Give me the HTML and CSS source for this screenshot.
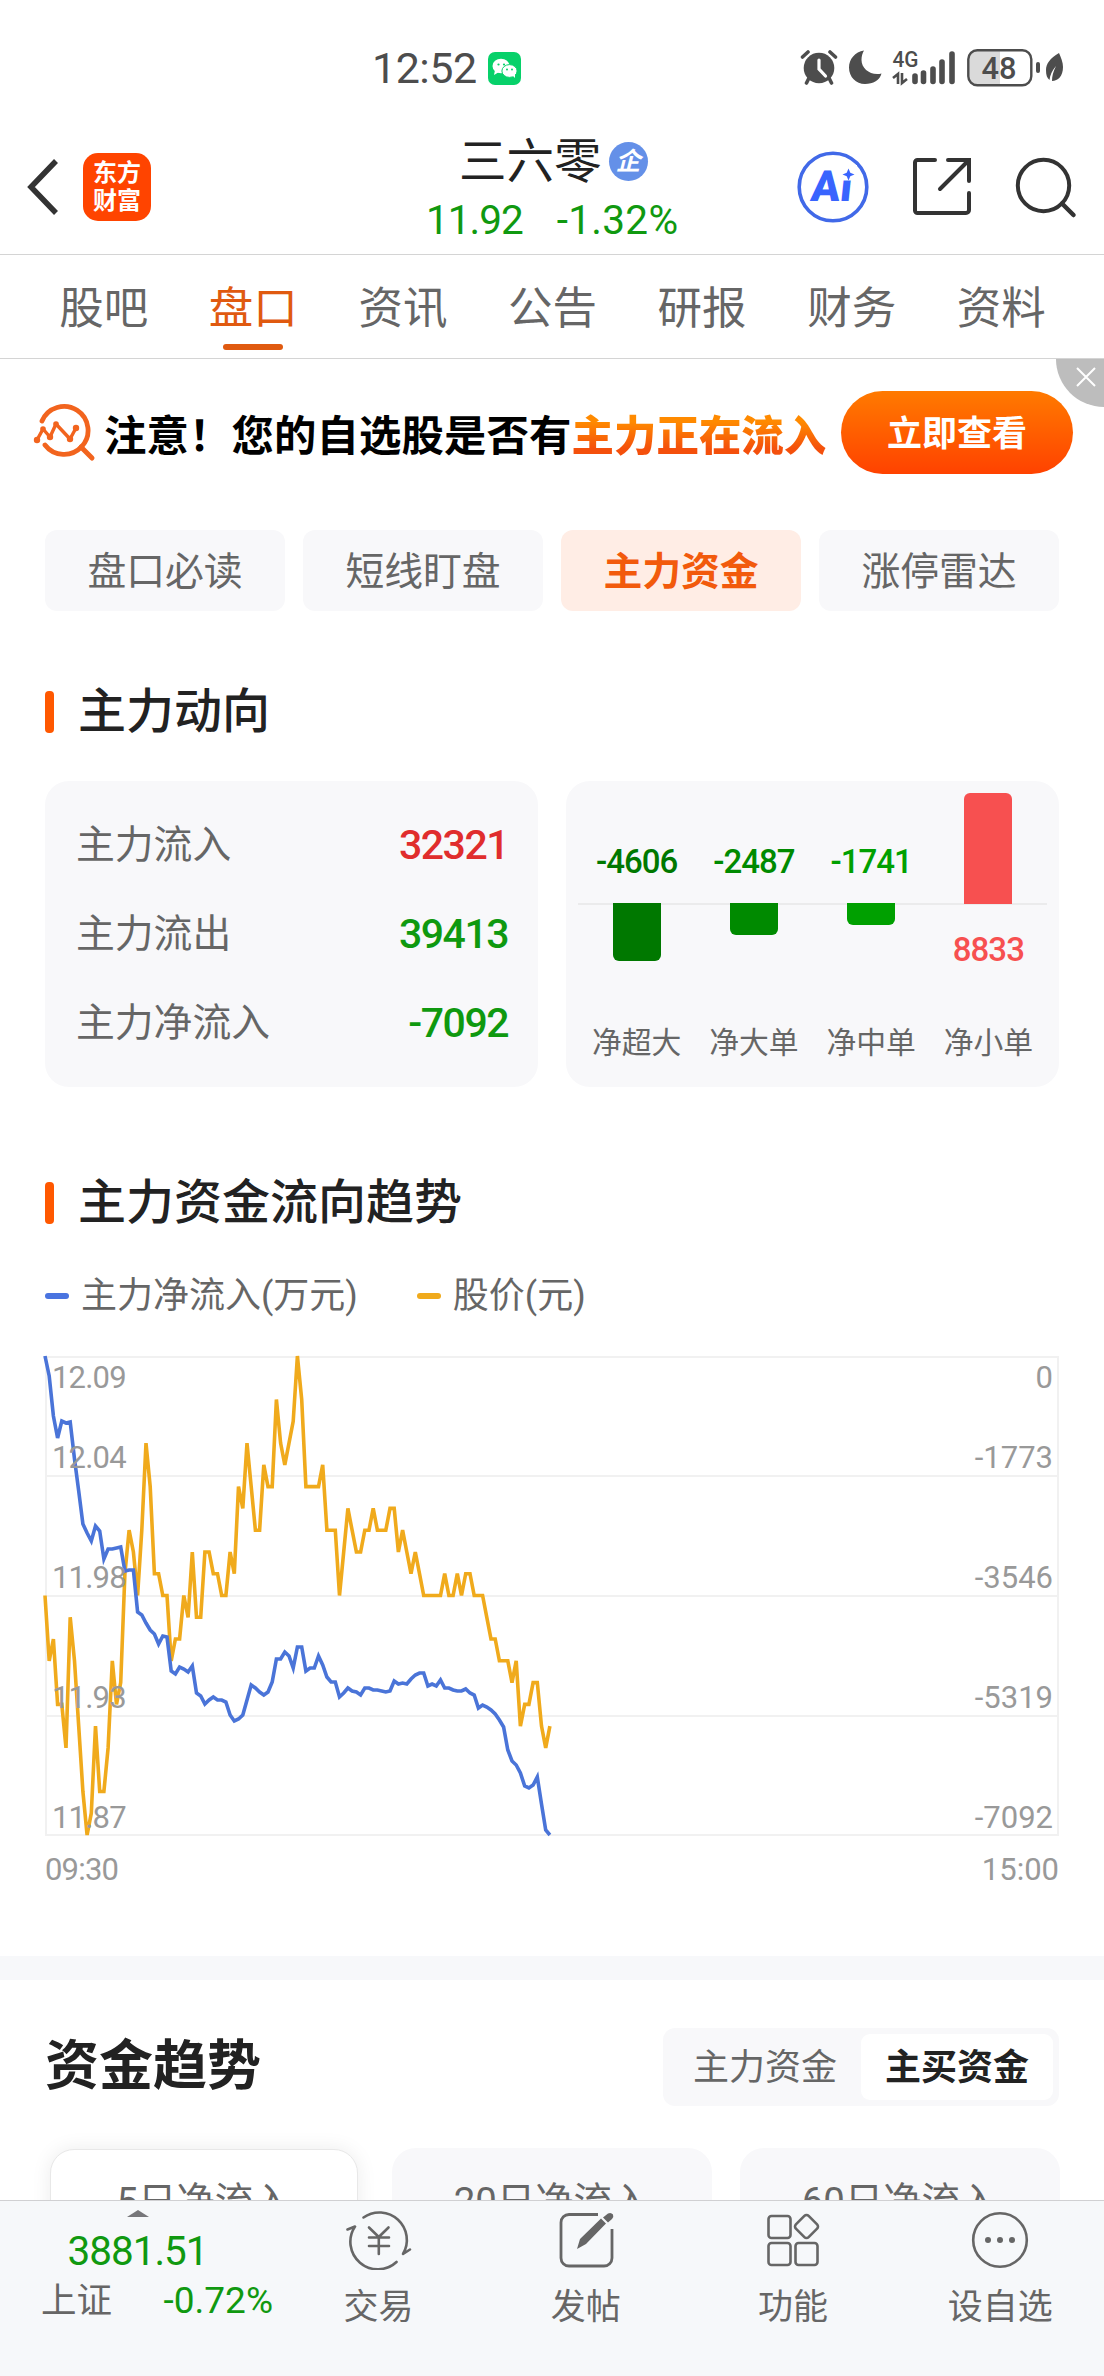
FILE: index.html
```html
<!DOCTYPE html>
<html lang="zh-CN">

<head>
    <meta charset="UTF-8">
    <title>三六零 - 主力资金</title>
    <link rel="stylesheet" href="styles.css">
</head>

<body>
    <div class="status-bar">
        <span class="time">12:52</span>
        <svg class="wechat" viewBox="0 0 33 33">
            <rect width="33" height="33" rx="7" fill="#07d16a"/>
            <ellipse cx="13" cy="14" rx="8.5" ry="7.3" fill="#fff"/>
            <path d="M7 18l-1 5 5-3z" fill="#fff"/>
            <ellipse cx="21.5" cy="19" rx="7.6" ry="6.4" fill="#fff" stroke="#07d16a" stroke-width="1"/>
            <path d="M24 23l3 3v-5z" fill="#fff"/>
            <g fill="#07d16a">
                <circle cx="10.5" cy="12.5" r="1.1"/>
                <circle cx="16" cy="12.5" r="1.1"/>
                <circle cx="19" cy="17.5" r="1"/>
                <circle cx="24" cy="17.5" r="1"/>
            </g>
        </svg>
        <svg class="status-icons" viewBox="0 0 266 40">
            <!-- 闹钟 -->
            <circle cx="19" cy="20" r="15.3" fill="#4d4d4d"/>
            <path d="M2.5 9l5.5-5M30 4l5.5 5M9 30l-2.5 5M29 30l2.5 5" stroke="#4d4d4d" stroke-width="3.6" stroke-linecap="round"/>
            <path d="M19 12v9l6.5 7" fill="none" stroke="#fff" stroke-width="3.2" stroke-linecap="round"/>
            <!-- 勿扰 -->
            <path d="M64 2.5C55 4 49 11 49 19.5C49 29 56 36 65 36C73 36 80 32 81.5 25.5C71 28 61.5 21 61.5 12C61.5 8 62.5 5 64 2.5z" fill="#4d4d4d"/>
            <!-- 信号 -->
            <text x="92.5" y="18.5" font-size="21.5" font-weight="500" textLength="26" lengthAdjust="spacingAndGlyphs" fill="#4d4d4d">4G</text>
            <path d="M93 30l5-4v10M102 25v10l5-4" fill="none" stroke="#4d4d4d" stroke-width="2.6"/>
            <path d="M115 28v5.5M123.5 25v8.5M133 21v12.5M142 14v19.5M152 6v27.5" stroke="#4d4d4d" stroke-width="5.6" stroke-linecap="round"/>
            <!-- 电量 -->
            <path d="M200 3h-23a8 8 0 0 0-8 8v17a8 8 0 0 0 8 8h23z" fill="#dadada"/>
            <rect x="168.3" y="2.3" width="63" height="35" rx="9" fill="none" stroke="#4d4d4d" stroke-width="2.4"/>
            <text x="199" y="30.8" font-size="32" font-weight="500" text-anchor="middle" textLength="35" lengthAdjust="spacingAndGlyphs" fill="#4d4d4d">48</text>
            <rect x="236" y="14" width="4" height="11" rx="2" fill="#4d4d4d"/>
            <path d="M259 5C250 10 246 16 246 22C246 27 247 30 249.5 32C250 27 252 23 256 18C253 24 252 28 252 33C258 33 263 28 263 19C263 14 261 10 259 5z" fill="#4d4d4d"/>
        </svg>
    </div>

    <header>
        <div class="header-left">
            <svg class="back" viewBox="0 0 32 58"><path d="M29 3L4 29L29 55" fill="none" stroke="#333" stroke-width="5.5"/></svg>
            <div class="logo">东方<br>财富</div>
        </div>
        <div class="stock">
            <div class="stock-name">三六零<span class="badge">企</span></div>
            <div class="stock-price"><span>11.92</span><span class="rate">-1.32%</span></div>
        </div>
        <div class="header-right">
            <svg class="ai" viewBox="0 0 72 72">
                <circle cx="36" cy="36" r="33.8" fill="none" stroke="#4169e8" stroke-width="3.6"/>
                <text x="18" y="50.5" font-size="43" font-weight="900" textLength="41" lengthAdjust="spacingAndGlyphs" transform="skewX(-6)" fill="#3964fe">Ai</text>
                <rect x="43" y="14" width="17" height="15.5" fill="#fff"/>
                <path d="M51.5 17.5l1.8 4.2 4.2 1.8-4.2 1.8-1.8 4.2-1.8-4.2-4.2-1.800 4.2-1.8z" fill="#3964fe"/>
            </svg>
            <svg class="share" viewBox="0 0 62 62">
                <path d="M24 4H6.5a2.5 2.5 0 0 0-2.5 2.5V54.5a2.5 2.5 0 0 0 2.5 2.5H55a3 3 0 0 0 3-3V37M37 4H58V25M57 5L29 33" fill="none" stroke="#333" stroke-width="4" stroke-linecap="round"/>
            </svg>
            <svg class="search" viewBox="0 0 64 64">
                <circle cx="30.5" cy="30.5" r="25.7" fill="none" stroke="#333" stroke-width="4"/>
                <path d="M49 48.5L60.5 60" stroke="#333" stroke-width="4.5" stroke-linecap="round"/>
            </svg>
        </div>
    </header>

    <nav class="tabs">
        <a>股吧</a>
        <a class="on">盘口</a>
        <a>资讯</a>
        <a>公告</a>
        <a>研报</a>
        <a>财务</a>
        <a>资料</a>
    </nav>

    <div class="banner">
        <svg class="banner-icon" viewBox="0 0 64 62">
            <g fill="none" stroke="#f2641e" stroke-linecap="round" stroke-linejoin="round">
                <path d="M10 19A24 24 0 1 1 13 43" stroke-width="4.8"/>
                <path d="M49 45L60 56" stroke-width="5"/>
                <path d="M5 38L11 27L18 35L24 22L38 37L44 26" stroke-width="3.4"/>
            </g>
            <g fill="#f2641e">
                <circle cx="5" cy="38" r="3.2"/>
                <circle cx="11" cy="27" r="2.8"/>
                <circle cx="18" cy="35" r="3.2"/>
                <circle cx="24" cy="22" r="2.8"/>
                <circle cx="38" cy="37" r="3.2"/>
                <circle cx="44" cy="26" r="3.2"/>
            </g>
        </svg>
        <p>注意！您的自选股是否有<b>主力正在流入</b></p>
        <button>立即查看</button>
        <div class="close">
            <svg viewBox="0 0 20 20"><path d="M1 1L19 19M19 1L1 19" stroke="#fff" stroke-width="2"/></svg>
        </div>
    </div>

    <div class="pills">
        <a>盘口必读</a>
        <a>短线盯盘</a>
        <a class="on">主力资金</a>
        <a>涨停雷达</a>
    </div>

    <h2 class="trend-title">主力动向</h2>
    <div class="cards">
        <div class="card">
            <div class="row"><span>主力流入</span><b class="red">32321</b></div>
            <div class="row"><span>主力流出</span><b>39413</b></div>
            <div class="row"><span>主力净流入</span><b>-7092</b></div>
        </div>
        <div class="card bars">
            <div class="col down c1">
                <div class="up-area">-4606</div>
                <div class="down-area"><i style="height:58px"></i></div>
                <span>净超大</span>
            </div>
            <div class="col down c2">
                <div class="up-area">-2487</div>
                <div class="down-area"><i style="height:32px"></i></div>
                <span>净大单</span>
            </div>
            <div class="col down c3">
                <div class="up-area">-1741</div>
                <div class="down-area"><i style="height:22px"></i></div>
                <span>净中单</span>
            </div>
            <div class="col up c4">
                <div class="up-area"><i style="height:111px"></i></div>
                <div class="down-area">8833</div>
                <span>净小单</span>
            </div>
        </div>
    </div>

    <h2 class="flow-title">主力资金流向趋势</h2>
    <div class="legend">
        <span class="blue">主力净流入(万元)</span>
        <span class="yellow">股价(元)</span>
    </div>
    <svg class="chart" viewBox="0 0 1014 528">
        <g class="grid">
            <path d="M0 1H1014M0 120H1014M0 240H1014M0 360H1014M0 479H1014M1 0V480M1013 0V480"/>
        </g>
        <polyline id="price" class="line price"/>
        <polyline id="flow" class="line flow"/>
        <g class="axis">
            <text x="7" y="32">12.09</text>
            <text x="7" y="112">12.04</text>
            <text x="7" y="232">11.98</text>
            <text x="7" y="352">11.93</text>
            <text x="7" y="472">11.87</text>
            <text x="0" y="524">09:30</text>
        </g>
        <g class="axis right">
            <text x="1008" y="32">0</text>
            <text x="1008" y="112">-1773</text>
            <text x="1008" y="232">-3546</text>
            <text x="1008" y="352">-5319</text>
            <text x="1008" y="472">-7092</text>
            <text x="1014" y="524">15:00</text>
        </g>
    </svg>

    <div class="split"></div>

    <div class="fund-head">
        <h1>资金趋势</h1>
        <div class="switch"><a>主力资金</a><a class="on">主买资金</a></div>
    </div>
    <div class="days">
        <div class="day on">5日净流入</div>
        <div class="day">20日净流入</div>
        <div class="day">60日净流入</div>
    </div>

    <footer>
        <div class="index">
            <i class="arrow"></i>
            <div class="index-num">3881.51</div>
            <div class="index-row"><span>上证</span><b>-0.72%</b></div>
        </div>
        <div class="item">
            <svg viewBox="0 0 68 60" width="68">
                <g fill="none" stroke="#666" stroke-width="2.6" stroke-linecap="round" stroke-linejoin="round">
                    <path d="M18.5 7.5A27.5 27.5 0 0 1 58 44L65 39.5"/>
                    <path d="M51.5 52A27.5 27.5 0 0 1 10 16.5L2.5 19.5"/>
                    <path d="M24 17.5L33.8 27L43.5 17.5M33.8 27V44M24 27.5H44M24 36H44"/>
                </g>
            </svg>
            <span>交易</span>
        </div>
        <div class="item">
            <svg viewBox="0 0 60 60" width="60">
                <path d="M42 4.5H13a8 8 0 0 0-8 8V48a8 8 0 0 0 8 8H48a8 8 0 0 0 8-8V19" fill="none" stroke="#666" stroke-width="2.8"/>
                <path d="M21 39L24 29L45 8.5L50 13.5L30 34zM47 7.5L52 3.5Q55 2 57 4.5Q58 7 56 9L52 12.5z" fill="#666"/>
            </svg>
            <span>发帖</span>
        </div>
        <div class="item">
            <svg viewBox="0 0 54 60" width="54">
                <g fill="none" stroke="#666" stroke-width="2.6">
                    <rect x="2.5" y="6" width="22" height="22" rx="3"/>
                    <rect x="2.5" y="33" width="22" height="22" rx="3"/>
                    <rect x="29.5" y="33" width="22" height="22" rx="3"/>
                    <rect x="31.5" y="7.5" width="18" height="18" rx="3" transform="rotate(45 40.5 16.5)"/>
                </g>
            </svg>
            <span>功能</span>
        </div>
        <div class="item">
            <svg viewBox="0 0 60 60" width="60">
                <circle cx="30" cy="30" r="26.8" fill="none" stroke="#666" stroke-width="2.6"/>
                <g fill="#666">
                    <circle cx="18" cy="30" r="3"/>
                    <circle cx="30" cy="30" r="3"/>
                    <circle cx="42" cy="30" r="3"/>
                </g>
            </svg>
            <span>设自选</span>
        </div>
    </footer>

    <script src="script.js"></script>
</body>

</html>
```
FILE: styles.css
```css
* {
    margin: 0;
    padding: 0;
    box-sizing: border-box;
}

body {
    width: 1104px;
    height: 2376px;
    overflow: hidden;
    background: #fff;
    color: #222;
    font-family: Roboto, "Noto Sans CJK SC", sans-serif;
}

svg {
    display: block;
    flex: none;
}

/* 状态栏 */
.status-bar {
    height: 118px;
    padding: 18px 38px 0 372px;
    display: flex;
    align-items: center;
}

.time {
    width: 116px;
    font-size: 43px;
    letter-spacing: -0.5px;
    color: #4d4d4d;
}

.wechat {
    width: 33px;
    height: 33px;
}

.status-icons {
    width: 266px;
    height: 40px;
    margin-left: auto;
}

/* 头部 */
header {
    height: 137px;
    padding-top: 2px;
    border-bottom: 1px solid #d4d4d4;
    display: grid;
    grid-template-columns: 1fr 260px 1fr;
    align-items: center;
}

.header-left {
    display: flex;
    align-items: center;
    padding-left: 27px;
}

.back {
    width: 32px;
    height: 58px;
}

.logo {
    width: 68px;
    height: 68px;
    margin-left: 24px;
    padding-top: 6px;
    border-radius: 15px;
    background: #ff4400;
    color: #fff;
    font-size: 24px;
    font-weight: 700;
    line-height: 28px;
    text-align: center;
}

.stock {
    padding-top: 5px;
}

.stock-name {
    height: 60px;
    padding-left: 37px;
    display: flex;
    align-items: center;
    font-size: 47.5px;
    line-height: 60px;
}

.badge {
    width: 39px;
    height: 39px;
    margin-left: 7px;
    border-radius: 50%;
    background: #6490e8;
    color: #fff;
    font-size: 25px;
    font-weight: 700;
    font-style: italic;
    line-height: 39px;
    text-align: center;
}

.stock-price {
    height: 56px;
    padding-left: 4px;
    display: flex;
    font-size: 40.5px;
    letter-spacing: -1px;
    line-height: 56px;
    color: #109910;
}

.rate {
    margin-left: 34px;
    letter-spacing: 0.3px;
}

.header-right {
    display: flex;
    align-items: center;
    justify-content: flex-end;
    padding-right: 27px;
}

.ai {
    width: 72px;
    height: 72px;
}

.share {
    width: 62px;
    height: 62px;
    margin: 0 40px 0 42px;
}

.search {
    width: 64px;
    height: 64px;
}

/* 频道 */
.tabs {
    height: 104px;
    padding: 0 28px 0 29px;
    border-bottom: 1px solid #d4d4d4;
    display: flex;
}

.tabs a {
    flex: 1;
    display: flex;
    flex-direction: column;
    align-items: center;
    padding-top: 24px;
    font-size: 44.5px;
    line-height: 60px;
    color: #666;
}

.tabs .on {
    color: #e05a10;
}

.tabs .on::after {
    content: "";
    width: 60px;
    height: 6px;
    margin-top: 5px;
    border-radius: 3px;
    background: #e05a10;
}

/* 广告条 */
.banner {
    position: relative;
    height: 171px;
    padding: 32px 31px 0 32px;
    display: flex;
    align-items: flex-start;
}

.banner-icon {
    width: 64px;
    height: 62px;
    margin-top: 11px;
}

.banner p {
    margin-left: 8px;
    font-size: 42.4px;
    font-weight: 700;
    letter-spacing: 0.1px;
    line-height: 60px;
    margin-top: 16px;
    white-space: nowrap;
    color: #000;
}

.banner b {
    background: linear-gradient(#ff8a00 20%, #f4500c 75%);
    -webkit-background-clip: text;
    background-clip: text;
    color: transparent;
}

.banner button {
    width: 232px;
    height: 83px;
    margin-left: auto;
    padding-bottom: 5px;
    border: none;
    border-radius: 42px;
    background: linear-gradient(#ff7a00, #ff4200);
    color: #fff;
    font-family: inherit;
    font-size: 35px;
    font-weight: 700;
}

.close {
    position: absolute;
    top: 0;
    right: 0;
    width: 48px;
    height: 48px;
    padding: 8px 0 0 20px;
    border-bottom-left-radius: 48px;
    background: #bdbdbd;
}

.close svg {
    width: 20px;
    height: 20px;
}

/* 二级菜单 */
.pills {
    padding: 0 45px;
    display: flex;
    gap: 18px;
}

.pills a {
    flex: 1;
    height: 81px;
    border-radius: 12px;
    background: #f8f8fa;
    color: #666;
    font-size: 38.8px;
    line-height: 84px;
    text-align: center;
}

.pills .on {
    background: #ffede5;
    color: #f25a0c;
    font-weight: 700;
}

h2 {
    height: 60px;
    margin-left: 45px;
    display: flex;
    align-items: center;
    font-size: 48px;
    font-weight: 500;
    line-height: 64px;
}

h2::before {
    content: "";
    width: 9px;
    height: 42px;
    margin-right: 24px;
    border-radius: 4px;
    background: #ff5800;
}

.trend-title {
    margin-top: 71px;
}

.flow-title {
    margin-top: 86px;
}

/* 主力动向 */
.cards {
    margin: 39px 45px 0;
    display: flex;
    justify-content: space-between;
}

.card {
    width: 493px;
    height: 306px;
    border-radius: 24px;
    background: #f8f8fa;
}

.card:first-child {
    padding: 20px 30px 0 31px;
}

.row {
    height: 89px;
    display: flex;
    justify-content: space-between;
    font-size: 38.8px;
    line-height: 88px;
    color: #666;
}

.row b {
    font-size: 41px;
    font-weight: 500;
    letter-spacing: -1.5px;
    color: #0f990f;
}

.row .red {
    color: #e02d2d;
}

.bars {
    padding: 0 12px;
    display: flex;
}

.col {
    flex: 1;
    display: flex;
    flex-direction: column;
    text-align: center;
    font-size: 33px;
    font-weight: 500;
    letter-spacing: -1px;
    line-height: 40px;
}

.up-area {
    height: 124px;
    display: flex;
    align-items: flex-end;
    justify-content: center;
    border-bottom: 2px solid #ebebec;
}

.down-area {
    height: 118px;
    margin-top: -2px;
    display: flex;
    align-items: flex-start;
    justify-content: center;
}

.down .up-area {
    padding-bottom: 21px;
}

.up .down-area {
    padding-top: 27px;
}

.col i {
    width: 48px;
    background: currentColor;
}

.down i {
    border-radius: 0 0 6px 6px;
}

.up i {
    margin-bottom: -1px;
    border-radius: 6px 6px 0 0;
}

.c1 {
    color: #007800;
}

.c2 {
    color: #008a00;
}

.c3 {
    color: #00a000;
}

.c4 {
    color: #f75050;
}

.col span {
    font-size: 29.8px;
    font-weight: 400;
    letter-spacing: 0;
    line-height: 44px;
    color: #666;
}

/* 流向趋势 */
.legend {
    height: 50px;
    margin: 38px 45px 0;
    display: flex;
    gap: 59px;
    font-size: 36px;
    line-height: 52px;
    color: #666;
}

.legend span {
    display: flex;
    align-items: center;
}

.legend span::before {
    content: "";
    width: 24px;
    height: 6px;
    margin-right: 12px;
    border-radius: 3px;
}

.blue::before {
    background: #4a74e0;
}

.yellow::before {
    background: #f0aa1c;
}

.chart {
    width: 1014px;
    height: 528px;
    margin: 35px 45px 0;
    overflow: visible;
}

.grid {
    stroke: #f1f1f1;
    stroke-width: 2;
}

.line {
    fill: none;
    stroke-width: 3.6;
}

.price {
    stroke: #f0aa1c;
}

.flow {
    stroke: #4a74d8;
}

.axis {
    fill: #999;
    font-size: 31px;
    letter-spacing: -0.8px;
}

.right {
    letter-spacing: 0;
    text-anchor: end;
}

.split {
    height: 24px;
    margin-top: 72px;
    background: #f7f8fa;
}

/* 资金趋势 */
.fund-head {
    padding: 48px 45px 0;
    display: flex;
    justify-content: space-between;
    align-items: center;
}

h1 {
    font-size: 54px;
    font-weight: 700;
    line-height: 78px;
}

.switch {
    width: 396px;
    height: 78px;
    padding: 6px;
    border-radius: 12px;
    background: #f8f8fa;
    display: flex;
    font-size: 36px;
    line-height: 69px;
    text-align: center;
    color: #666;
}

.switch a {
    flex: 1;
}

.switch .on {
    border-radius: 9px;
    background: #fff;
    color: #222;
    font-weight: 700;
}

.days {
    margin: 42px 44px 0 45px;
    display: flex;
    gap: 28px;
}

.day {
    flex: none;
    width: 320px;
    height: 160px;
    border-radius: 24px;
    background: #f8f8fa;
    color: #666;
    font-size: 38.4px;
    line-height: 107px;
    text-align: center;
}

.days .on {
    width: 308px;
    margin: 1px 6px 0 5px;
    border: 1px solid #e8e8e8;
    background: #fff;
    box-shadow: 0 0 20px rgba(0, 0, 0, 0.08);
    line-height: 103px;
}

/* 底部 */
footer {
    position: fixed;
    left: 0;
    bottom: 0;
    width: 1104px;
    height: 176px;
    border-top: 1px solid #d0d0d2;
    background: #f6f8fa;
    display: flex;
    color: #666;
}

.index {
    width: 275px;
    display: flex;
    flex-direction: column;
    align-items: center;
    padding-top: 9px;
    color: #109910;
}

.arrow {
    border: 11px solid transparent;
    border-top: none;
    border-bottom: 7px solid #77777a;
}

.index-num {
    height: 50px;
    margin-top: 8px;
    font-size: 40.5px;
    letter-spacing: -1px;
    line-height: 52px;
}

.index-row {
    align-self: stretch;
    padding: 0 2px 0 41px;
    display: flex;
    justify-content: space-between;
    font-size: 37px;
    line-height: 52px;
}

.index-row span {
    font-size: 35.5px;
    color: #666;
}

.index-row b {
    font-weight: 400;
}

.item {
    flex: 1;
    display: flex;
    flex-direction: column;
    align-items: center;
    padding-top: 9px;
    font-size: 35px;
    line-height: 52px;
}

.item svg {
    height: 60px;
    margin-bottom: 12px;
}
```
FILE: script.js
```javascript
// 每分钟一个点，全天 241 个点
var step = 1014 / 241;

// 股价：距最高价 12.09 的分数
var price = [11, 14, 13, 16, 16, 18, 12, 14, 17, 20, 22, 21, 17, 20, 20, 18, 14, 16, 15, 10,
    8, 9, 11, 8, 4, 6, 10, 10, 11, 11, 14, 13, 13, 11, 12, 9, 12, 12, 9, 9,
    10, 10, 11, 11, 9, 10, 6, 7, 4, 6, 8, 8, 5, 6, 6, 2, 4, 5, 4, 3,
    0, 2, 6, 6, 6, 6, 5, 8, 8, 8, 11, 9, 7, 8, 9, 9, 8, 8, 7, 8,
    8, 8, 7, 7, 9, 8, 9, 10, 9, 10, 11, 11, 11, 11, 11, 10, 11, 11, 10, 11,
    10, 10, 11, 11, 11, 12, 13, 13, 14, 14, 14, 15, 14, 17, 16, 16, 15, 15, 17, 18, 17];

// 主力净流入：图上的高度
var flow = [0, 20, 60, 82, 65, 67, 66, 103, 135, 168, 177, 185, 170, 175, 203, 193, 193, 192, 191, 215,
    214, 214, 256, 259, 267, 274, 278, 288, 280, 281, 315, 318, 311, 313, 316, 310, 337, 340, 348, 344,
    341, 344, 344, 346, 359, 365, 363, 359, 344, 329, 332, 336, 339, 336, 326, 303, 303, 296, 300, 312,
    291, 291, 315, 312, 312, 300, 309, 321, 326, 326, 341, 337, 332, 335, 336, 339, 332, 332, 334, 334,
    335, 336, 335, 325, 328, 327, 328, 323, 319, 317, 317, 330, 328, 330, 324, 332, 332, 334, 335, 335,
    333, 337, 339, 352, 349, 351, 354, 358, 364, 371, 394, 405, 409, 417, 430, 432, 429, 421, 448, 474, 479];

function draw(id, data, scale) {
    var points = data.map(function (v, i) {
        return (i * step).toFixed(1) + "," + (v * scale).toFixed(1);
    });
    document.getElementById(id).setAttribute("points", points.join(" "));
}

draw("price", price, 479 / 22);
draw("flow", flow, 1);
```
